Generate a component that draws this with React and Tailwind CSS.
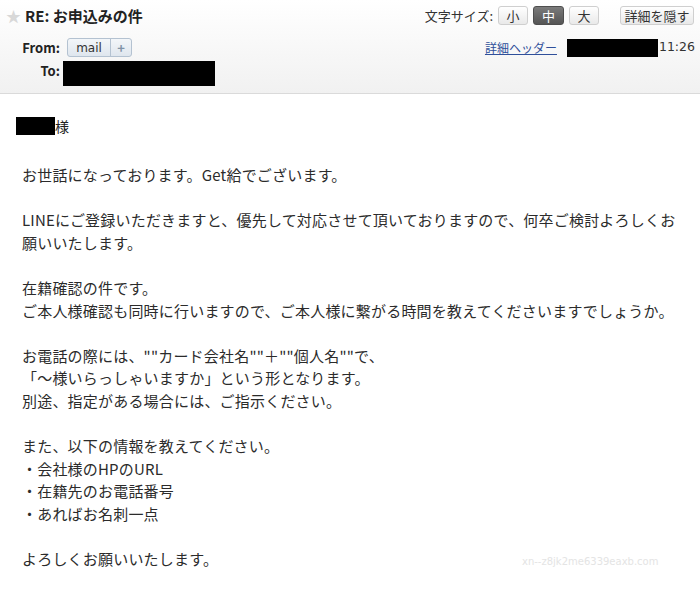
import React from "react";

const jp = { fontFamily: '"Noto Sans CJK JP", "Noto Sans", sans-serif' };

function LightBtn({ children, className = "" }) {
  return (
    <div
      className={
        "flex h-[19px] items-center justify-center rounded-[3px] border border-[#cfcfcf] bg-gradient-to-b from-white to-[#e9e9e9] text-[13px] leading-none text-[#333] " +
        className
      }
    >
      {children}
    </div>
  );
}

export default function App() {
  const lines = [
    "お世話になっております。Get給でございます。",
    "",
    "LINEにご登録いただきますと、優先して対応させて頂いておりますので、何卒ご検討よろしくお",
    "願いいたします。",
    "",
    "在籍確認の件です。",
    "ご本人様確認も同時に行いますので、ご本人様に繋がる時間を教えてくださいますでしょうか。",
    "",
    "お電話の際には、\"\"カード会社名\"\"＋\"\"個人名\"\"で、",
    "「～様いらっしゃいますか」という形となります。",
    "別途、指定がある場合には、ご指示ください。",
    "",
    "また、以下の情報を教えてください。",
    "・会社様のHPのURL",
    "・在籍先のお電話番号",
    "・あればお名刺一点",
    "",
    "よろしくお願いいたします。",
  ];

  return (
    <div className="relative h-[592px] w-[700px] overflow-hidden bg-white text-[#333]" style={jp}>
      {/* Header */}
      <div className="flex h-[94px] flex-col border-b border-[#dadada] bg-gradient-to-b from-white to-[#f1f1f1] pt-[6px]">
        {/* Row 1 */}
        <div className="flex h-[19px] items-center justify-between pr-[6px]">
          <div className="flex items-center">
            <span className="ml-[6px] text-[15px] leading-none text-[#d8d8d8]">★</span>
            <span className="ml-[4px] text-[15px] font-bold leading-none text-[#222]">RE: お申込みの件</span>
          </div>
          <div className="flex items-center">
            <span className="mr-[5px] text-[13px] leading-none text-[#333]">文字サイズ:</span>
            <LightBtn className="w-[30px]">小</LightBtn>
            <div className="ml-[5px] flex h-[19px] w-[31px] items-center justify-center rounded-[3px] border border-[#4e4e4e] bg-gradient-to-b from-[#7b7b7b] to-[#555] text-[13px] leading-none text-white">
              中
            </div>
            <LightBtn className="ml-[5px] w-[30px]">大</LightBtn>
            <LightBtn className="ml-[21px] w-[74px]">詳細を隠す</LightBtn>
          </div>
        </div>
        {/* Row 2 */}
        <div className="mt-[13px] flex h-[19px] items-center justify-between pr-[5px]">
          <div className="flex items-center">
            <span className="w-[60px] text-right text-[13px] font-bold leading-none text-[#222]">From:</span>
            <div className="ml-[7px] flex h-[19px] items-stretch rounded-[3px] border border-[#b4c2d1] bg-gradient-to-b from-[#f3f6f9] to-[#dfe6ee] text-[13px] leading-none">
              <span className="flex w-[42px] items-center justify-center text-[#333]" style={{ fontFamily: '"DejaVu Sans", sans-serif', fontSize: 12 }}>mail</span>
              <span className="flex w-[21px] items-center justify-center border-l border-[#b4c2d1] font-bold text-[#8193a8]">+</span>
            </div>
          </div>
          <div className="flex items-center">
            <a className="text-[12px] leading-none text-[#2f4f9a] underline">詳細ヘッダー</a>
            <div className="ml-[10px] h-[18px] w-[91px] bg-black" />
            <span className="ml-[1px] text-[13px] leading-none text-[#333]" style={{ fontFamily: '"DejaVu Sans", sans-serif', fontSize: 12.5 }}>11:26</span>
          </div>
        </div>
        {/* Row 3 */}
        <div className="mt-[4px] flex items-start">
          <span className="mt-[3px] w-[60px] text-right text-[13px] font-bold leading-none text-[#222]">To:</span>
          <div className="ml-[3px] h-[25px] w-[152px] bg-black" />
        </div>
      </div>

      {/* Body */}
      <div className="pt-[23px]">
        <div className="flex h-[18px] items-center pl-[16px]">
          <div className="h-[18px] w-[39px] bg-black" />
          <span className="text-[14px] leading-none text-[#222]">様</span>
        </div>
        <div className="mt-[29px] pl-[22px] text-[15px] leading-[22.6px] tracking-[0.2px] text-[#2b2b2b]">
          {lines.map((l, i) => (
            <div key={i} className="h-[22.6px] whitespace-nowrap">
              {l}
            </div>
          ))}
        </div>
      </div>

      <div
        className="absolute left-[522px] top-[557px] text-[10px] leading-none text-[#e4e4e4]"
        style={{ fontFamily: '"DejaVu Sans", sans-serif' }}
      >
        xn--z8jk2me6339eaxb.com
      </div>
    </div>
  );
}
